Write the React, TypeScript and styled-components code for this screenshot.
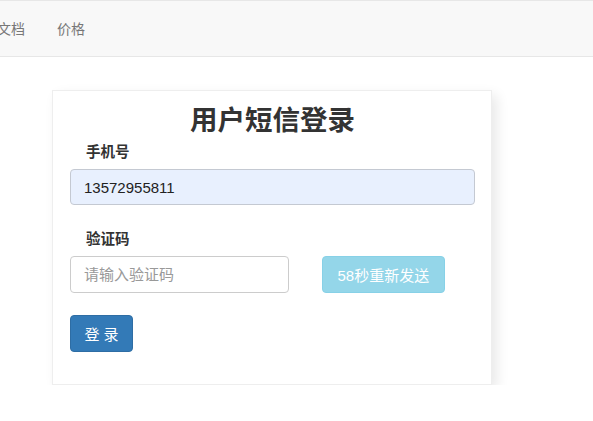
import React from "react";
import styled, { createGlobalStyle } from "styled-components";

const Global = createGlobalStyle`
  html, body { margin: 0; padding: 0; background: #fff; }
  body {
    font-family: "Liberation Sans", "Noto Sans CJK SC", sans-serif;
    font-size: 14px;
    color: #333;
  }
  * { box-sizing: border-box; }
`;

const NavBar = styled.nav`
  height: 57px;
  background: #f8f8f8;
  border-top: 1px solid #e7e7e7;
  border-bottom: 1px solid #e7e7e7;
  display: flex;
  align-items: center;
  overflow: hidden;
`;

const NavList = styled.ul`
  list-style: none;
  margin: 0 0 0 -19px;
  padding: 0;
  display: flex;
`;

const NavLink = styled.a`
  display: block;
  padding: 0 16px;
  color: #777;
  font-size: 14px;
  line-height: 20px;
  text-decoration: none;
`;

const Card = styled.div`
  width: 440px;
  margin: 33px 0 0 52px;
  background: #fff;
  border: 1px solid #eeeeee;
  box-shadow: 5px 5px 12px rgba(0, 0, 0, 0.09);
  padding: 0 16px 32px 17px;
`;

const Title = styled.h2`
  margin: 10px 0 0;
  font-size: 27.5px;
  line-height: 40px;
  font-weight: bold;
  text-align: center;
  color: #333;
`;

const Label = styled.label<{ $top: number }>`
  display: block;
  margin: ${(p) => p.$top}px 0 7px;
  padding-left: 16px;
  font-size: 14.5px;
  line-height: 20px;
  font-weight: bold;
  color: #333;
`;

const Input = styled.input<{ $filled?: boolean; $w?: number }>`
  display: block;
  width: ${(p) => (p.$w ? `${p.$w}px` : "100%")};
  height: ${(p) => (p.$filled ? 36 : 37)}px;
  padding: 0 13px;
  font-family: "Liberation Sans", "Noto Sans CJK SC", sans-serif;
  font-size: 15px;
  color: #222;
  background: ${(p) => (p.$filled ? "#e8f0fe" : "#fff")};
  border: 1px solid ${(p) => (p.$filled ? "#c4c9d2" : "#cccccc")};
  border-radius: 4px;
  outline: none;
  &::placeholder { color: #999; }
`;

const CodeRow = styled.div`
  display: flex;
  align-items: center;
  gap: 33px;
`;

const Button = styled.button<{ $variant: "info" | "primary" }>`
  height: 37px;
  padding: 0 ${(p) => (p.$variant === "info" ? 14.5 : 12)}px;
  font-family: "Liberation Sans", "Noto Sans CJK SC", sans-serif;
  font-size: 15px;
  color: #fff;
  border-radius: 4px;
  border: 1px solid ${(p) => (p.$variant === "info" ? "#87d1e7" : "#2e6da4")};
  background: ${(p) => (p.$variant === "info" ? "#94d6e9" : "#337ab7")};
  cursor: ${(p) => (p.$variant === "info" ? "not-allowed" : "pointer")};
`;

const LoginButton = styled(Button)`
  margin-top: 22px;
  width: 63px;
  display: block;
`;

export default function App() {
  return (
    <>
      <Global />
      <NavBar>
        <NavList>
          <li><NavLink href="#">文档</NavLink></li>
          <li><NavLink href="#">价格</NavLink></li>
        </NavList>
      </NavBar>
      <Card>
        <Title>用户短信登录</Title>
        <Label $top={1}>手机号</Label>
        <Input $filled defaultValue="13572955811" />
        <Label $top={24}>验证码</Label>
        <CodeRow>
          <Input $w={219} placeholder="请输入验证码" />
          <Button $variant="info" disabled>58秒重新发送</Button>
        </CodeRow>
        <LoginButton $variant="primary">登 录</LoginButton>
      </Card>
    </>
  );
}
